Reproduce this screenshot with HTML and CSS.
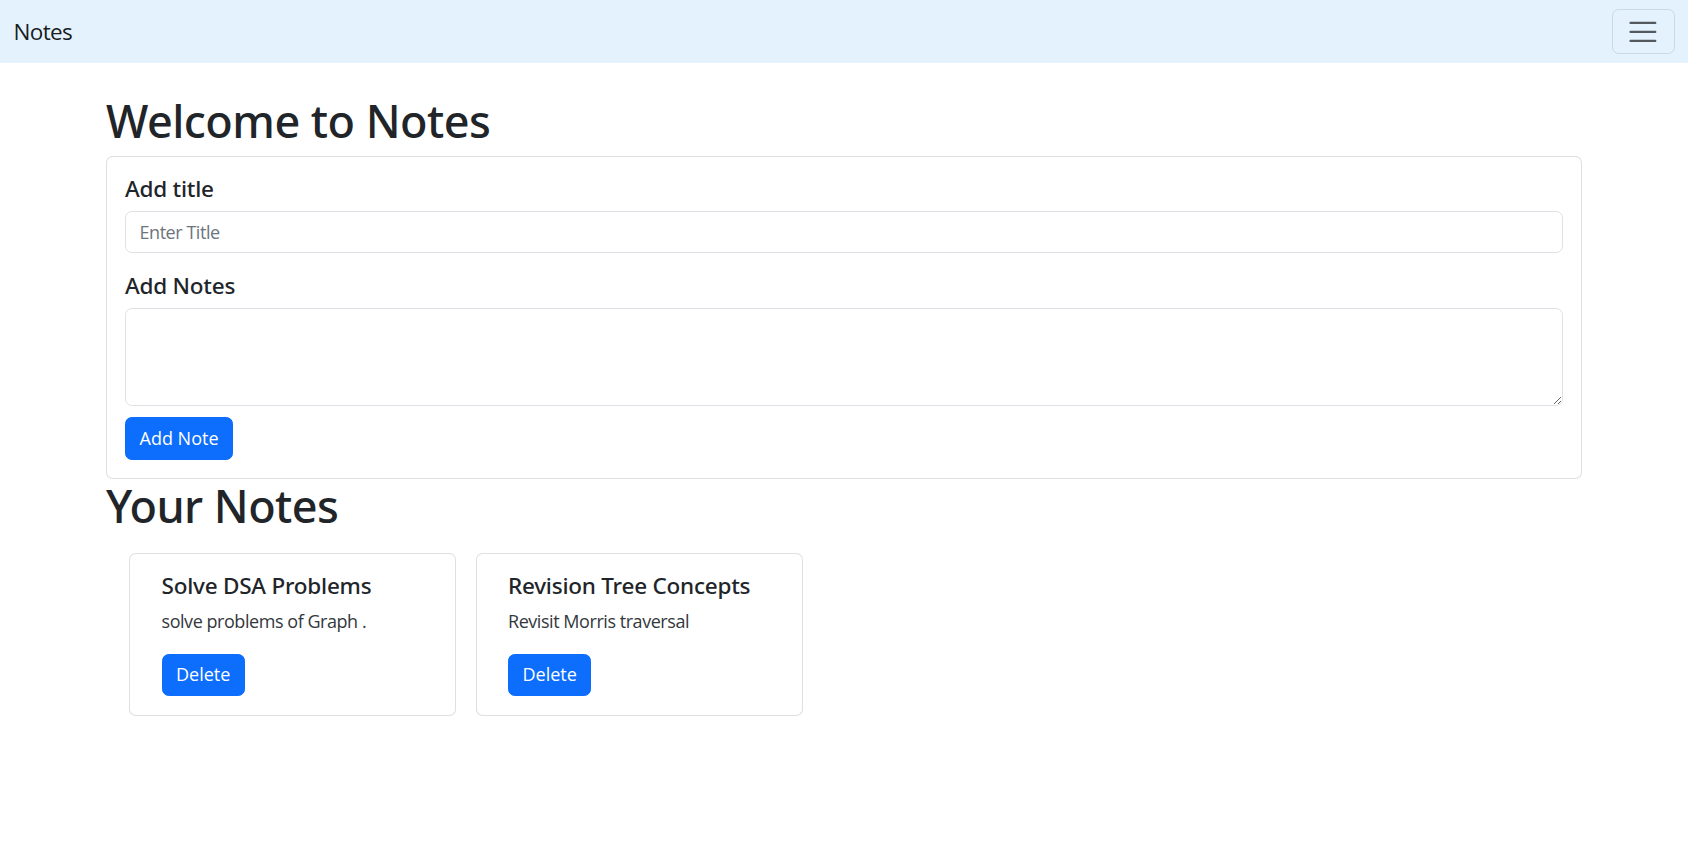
FILE: index.html
```html
<!DOCTYPE html>
<html lang="en">
<head>
<meta charset="utf-8">
<title>Notes</title>
<link rel="stylesheet" href="styles.css">
</head>
<body>
<nav class="navbar">
  <a class="brand" href="#">Notes</a>
  <button class="toggler" type="button" aria-label="Toggle navigation">
    <svg class="toggler-icon" viewBox="0 0 30 30" xmlns="http://www.w3.org/2000/svg">
      <path d="M4 7h22M4 15h22M4 23h22" stroke="rgba(33,37,41,0.75)" stroke-linecap="round" stroke-miterlimit="10" stroke-width="2" fill="none"/>
    </svg>
  </button>
</nav>
<main class="container">
  <h1 class="page-title">Welcome to Notes</h1>
  <form class="card form-card">
    <div class="group group-title">
      <h5 class="label">Add title</h5>
      <input class="control" type="text" placeholder="Enter Title">
    </div>
    <div class="group group-notes">
      <h5 class="label">Add Notes</h5>
      <textarea class="control area" rows="3"></textarea>
    </div>
    <div><button class="btn" type="button">Add Note</button></div>
  </form>
  <h1 class="section-title">Your Notes</h1>
  <div class="notes">
    <div class="card note">
      <h5 class="note-title">Solve DSA Problems</h5>
      <p class="note-text">solve problems of Graph .</p>
      <div><button class="btn" type="button">Delete</button></div>
    </div>
    <div class="card note">
      <h5 class="note-title">Revision Tree Concepts</h5>
      <p class="note-text">Revisit Morris traversal</p>
      <div><button class="btn" type="button">Delete</button></div>
    </div>
  </div>
</main>
</body>
</html>
```
FILE: styles.css
```css
* { box-sizing: border-box; }
html, body { margin: 0; padding: 0; background: #fff; }
body {
  font-family: "Open Sans", "Noto Sans", "Liberation Sans", sans-serif;
  font-size: 18px;
  line-height: 1.5;
  color: #212529;
}
.navbar {
  height: 63px;
  background: #e3f2fd;
  display: flex;
  align-items: center;
  justify-content: space-between;
  padding: 0 13.5px;
}
.brand {
  font-size: 22.5px;
  line-height: 33.75px;
  letter-spacing: -0.03em;
  color: rgba(0, 0, 0, 0.9);
  text-decoration: none;
}
.toggler {
  width: 62.75px;
  height: 44.75px;
  padding: 4.5px 13.5px;
  background: transparent;
  border: 1px solid rgba(0, 0, 0, 0.1);
  border-radius: 6.75px;
  display: flex;
  align-items: center;
  justify-content: center;
  margin: 0;
}
.toggler-icon { width: 33.75px; height: 33.75px; display: block; }
.container {
  width: 1476px;
  margin: 0 auto;
  padding-top: 30.5px;
  display: flex;
  flex-direction: column;
}
h1, h5 {
  margin: 0;
  font-family: "Noto Sans", "Open Sans", sans-serif;
  font-weight: 500;
}
.page-title, .section-title {
  font-size: 45px;
  line-height: 54px;
  letter-spacing: -0.012em;
  margin-bottom: 8px;
}
.card {
  background: #fff;
  border: 1px solid rgba(0, 0, 0, 0.125);
  border-radius: 6.75px;
}
.form-card {
  padding: 18px;
  margin: 0;
}
.label {
  font-size: 22.5px;
  line-height: 27px;
  letter-spacing: -0.01em;
  margin-bottom: 9px;
}
.group-title { margin-bottom: 19px; }
.group-notes { margin-bottom: 11.5px; }
.control {
  display: block;
  width: 100%;
  height: 42.75px;
  padding: 6.75px 13.5px;
  font-family: inherit;
  font-size: 18px;
  line-height: 27px;
  letter-spacing: -0.025em;
  color: #212529;
  background: #fff;
  border: 1px solid #dee2e6;
  border-radius: 6.75px;
  margin: 0;
  outline: none;
}
.control::placeholder { color: #6c757d; opacity: 1; }
.area { height: 97.5px; resize: vertical; }
.btn {
  display: inline-block;
  height: 42.75px;
  padding: 6.75px 13.5px;
  font-family: inherit;
  font-size: 18px;
  line-height: 27px;
  color: #fff;
  background: #0d6efd;
  border: 1px solid #0d6efd;
  border-radius: 6.75px;
  margin: 0;
}
.notes {
  display: flex;
  gap: 19.5px;
  margin-top: 12px;
  padding-left: 23px;
}
.note {
  width: 327px;
  padding: 18px 31.5px 18.5px;
}
.note-title {
  font-size: 22.5px;
  line-height: 27px;
  letter-spacing: -0.01em;
  margin-bottom: 9px;
}
.note-text {
  margin: 0 0 18.5px;
  font-size: 18px;
  line-height: 27px;
  letter-spacing: -0.025em;
  color: #33383c;
}
```
